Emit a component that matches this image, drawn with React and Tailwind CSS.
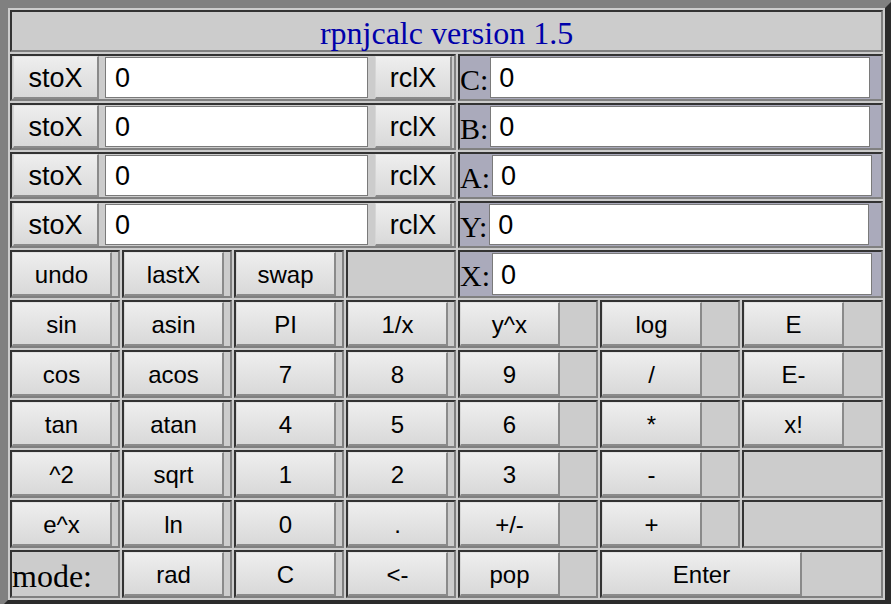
import React from "react";

const SANS = "font-['Liberation_Sans',Arial,sans-serif]";
const SERIF = "font-['Liberation_Serif','Times_New_Roman',serif]";

function Cell({ span = "", bg = "bg-[#cccccc]", align = "items-stretch", justify = "", children }) {
  return (
    <div
      className={`border-2 border-t-[#333333] border-l-[#333333] border-r-[#808080] border-b-[#808080] flex min-w-0 ${span} ${bg} ${align} ${justify}`}
    >
      {children}
    </div>
  );
}

function Btn({ children, w = "w-[100px]", size = "text-[24px]", extra = "" }) {
  return (
    <button
      className={`${w} ${size} ${extra} h-full shrink-0 pt-[2px] border-t border-l border-r-2 border-b-2 border-t-[#e2e2e2] border-l-[#d6d6d6] border-r-[#8a8a8a] border-b-[#8a8a8a] bg-linear-to-b from-[#eeeeee] to-[#d9d9d9] text-black leading-none ${SANS}`}
    >
      {children}
    </button>
  );
}

function RegRow({ label }) {
  return (
    <>
      <Cell span="col-span-4">
        <Btn w="w-[86px]" size="text-[27px]" extra="ml-[1px]">
          stoX
        </Btn>
        <div
          className={`ml-[6px] w-[263px] my-[1px] bg-white border border-[#7a7a7a] flex items-center pl-[9px] pt-[2px] text-[27px] leading-none text-black ${SANS}`}
        >
          0
        </div>
        <Btn w="w-[77px]" size="text-[27px]" extra="ml-[7px]">
          rclX
        </Btn>
      </Cell>
      <XReg label={label} />
    </>
  );
}

function XReg({ label }) {
  return (
    <Cell span="col-span-3" bg="bg-[#aaaabb]" align="items-stretch">
      <span className={`flex items-center pt-[4px] text-[30px] leading-none text-black ${SERIF}`}>
        {label}
      </span>
      <div
        className={`ml-[2px] w-[380px] my-[1px] bg-white border border-[#7a7a7a] flex items-center pl-[8px] pt-[2px] text-[27px] leading-none text-black ${SANS}`}
      >
        0
      </div>
    </Cell>
  );
}

const keyRows = [
  ["sin", "asin", "PI", "1/x", "y^x", "log", "E"],
  ["cos", "acos", "7", "8", "9", "/", "E-"],
  ["tan", "atan", "4", "5", "6", "*", "x!"],
  ["^2", "sqrt", "1", "2", "3", "-", null],
  ["e^x", "ln", "0", ".", "+/-", "+", null],
];

export default function App() {
  return (
    <div className="w-[891px] h-[604px] overflow-hidden bg-white">
      <div className="w-[893px] grid grid-cols-[110px_110px_110px_110px_140px_140px_141px] grid-rows-[42px_47px_47px_47px_47px_48px_48px_48px_48px_48px_48px_48px] gap-[2px] p-[2px] bg-[#cccccc] border-8 border-t-[#808080] border-l-[#808080] border-r-[#2b2b2b] border-b-[#2b2b2b]">
        <Cell span="col-span-7" align="items-center" justify="justify-center">
          <span className={`pt-[3px] text-[32px] leading-none text-[#0000aa] ${SERIF}`}>
            rpnjcalc version 1.5
          </span>
        </Cell>

        <RegRow label="C:" />
        <RegRow label="B:" />
        <RegRow label="A:" />
        <RegRow label="Y:" />

        <Cell>
          <Btn>undo</Btn>
        </Cell>
        <Cell>
          <Btn>lastX</Btn>
        </Cell>
        <Cell>
          <Btn>swap</Btn>
        </Cell>
        <Cell />
        <XReg label="X:" />

        {keyRows.map((row, ri) =>
          row.map((k, ci) => (
            <Cell key={`${ri}-${ci}`}>{k !== null ? <Btn>{k}</Btn> : null}</Cell>
          ))
        )}

        <Cell align="items-center">
          <span className={`pt-[4px] text-[32px] leading-none text-black ${SERIF}`}>mode:</span>
        </Cell>
        <Cell>
          <Btn>rad</Btn>
        </Cell>
        <Cell>
          <Btn>C</Btn>
        </Cell>
        <Cell>
          <Btn>{"<-"}</Btn>
        </Cell>
        <Cell>
          <Btn>pop</Btn>
        </Cell>
        <Cell span="col-span-2">
          <Btn w="w-[200px]">Enter</Btn>
        </Cell>
      </div>
    </div>
  );
}
